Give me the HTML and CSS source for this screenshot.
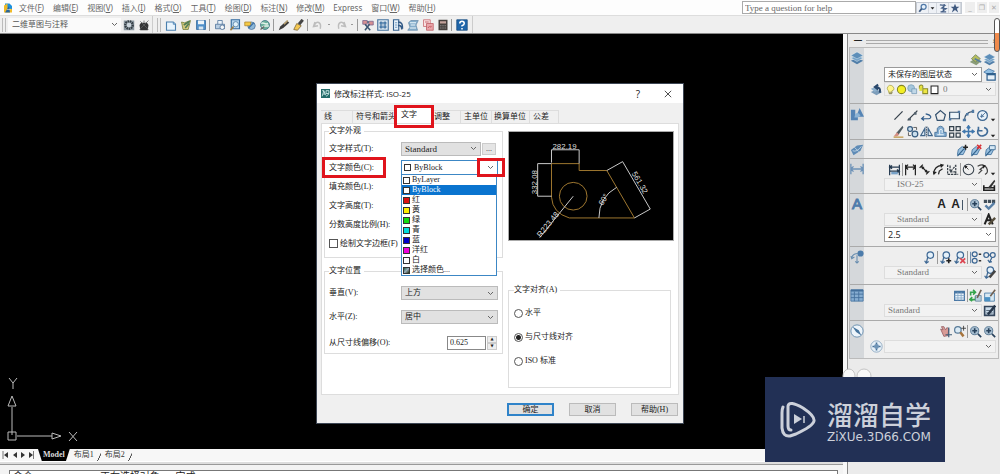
FILE: index.html
```html
<!DOCTYPE html>
<html lang="zh-CN">
<head>
<meta charset="utf-8">
<title>修改标注样式</title>
<link rel="stylesheet" href="styles.css">
</head>
<body>
<svg class="defs" aria-hidden="true">
  <symbol id="new" viewBox="0 0 16 16"><path d="M2 4h9l3 3v8H2z" fill="#e8f4fd" stroke="#4a7fae" stroke-width="1.5"/><path d="M11 4v3h3" fill="#9cc5e6" stroke="#4a7fae"/></symbol>
  <symbol id="open" viewBox="0 0 16 16"><path d="M2 4l4 1 8-3-3 12H4z" fill="#d3c77a" stroke="#6f7c38"/><path d="M5 8l8-5M7 12l5-6" stroke="#4d7c58" stroke-width="2"/></symbol>
  <symbol id="save" viewBox="0 0 16 16"><path d="M2 2h12v12H2z" fill="#4f8fc9" stroke="#30679c"/><path d="M4 2h8v5H4z" fill="#eef5fa"/><path d="M5 10h6v4H5z" fill="#d5e4ef"/></symbol>
  <symbol id="print" viewBox="0 0 16 16"><path d="M5 7V2h6v5" fill="#eef5fa" stroke="#4a6e95"/><path d="M2 7h12v6H2z" fill="#b7cce0" stroke="#4a6e95"/><circle cx="11" cy="11" r="3" fill="#f5f8fa" stroke="#45688f"/></symbol>
  <symbol id="preview" viewBox="0 0 16 16"><path d="M3 1h11v12H3z" fill="#b6d4ed" stroke="#336a9e" stroke-width="1.5"/><circle cx="9" cy="7" r="3.500" fill="#e2f1fa" stroke="#47759d"/><path d="M6 10l-4 5" stroke="#9b7b42" stroke-width="2"/></symbol>
  <symbol id="publish" viewBox="0 0 16 16"><circle cx="10" cy="9" r="5" fill="#8db8d8" stroke="#476f98"/><path d="M1 4h8v5H1z" fill="#f4c945" stroke="#a9842d"/><path d="M6 12l7-7" stroke="#3f72a5" stroke-width="2"/></symbol>
  <symbol id="globe" viewBox="0 0 16 16"><circle cx="8" cy="8" r="6" fill="#6eb19c" stroke="#386c82"/><path d="M3 6c4-3 4 3 9 0M4 11c3-3 6-1 9-2" stroke="#e4f4ec" stroke-width="2" fill="none"/><path d="M2 14l5-4" stroke="#666" stroke-width="2"/></symbol>
  <symbol id="pen" viewBox="0 0 16 16"><path d="M1 15l2-5 9-8 3 3-8 7z" fill="#3e3c3b"/><path d="M8 7l5-5" stroke="#bba26f" stroke-width="2"/></symbol>
  <symbol id="match" viewBox="0 0 16 16"><path d="M1 14l4-8 6 3-5 6z" fill="#f4c853" stroke="#765f2e"/><path d="M8 7l5-6" stroke="#444" stroke-width="4"/></symbol>
  <symbol id="undo" viewBox="0 0 16 16"><path d="M4 4l-2 6 6-1M3 9c3-8 10-5 8 4" fill="none" stroke="#bdbdbd" stroke-width="2"/></symbol>
  <symbol id="redo" viewBox="0 0 16 16"><path d="M12 4l2 6-6-1M13 9C10 1 3 4 5 13" fill="none" stroke="#bdbdbd" stroke-width="2"/></symbol>
  <symbol id="props" viewBox="0 0 16 16"><path d="M1 2h6v5H1zM9 3h6v5H9z" fill="#d68f91" stroke="#75628b"/><path d="M4 7l7 8M10 7l-6 8M7 4h2" stroke="#3a536f" stroke-width="2"/></symbol>
  <symbol id="grid" viewBox="0 0 16 16"><path d="M1 1h14v14H1z" fill="#dce9f3" stroke="#46739d" stroke-width="1.500"/><path d="M4 4h3v3H4zM9 4h3v3H9zM4 9h3v3H4zM9 9h3v3H9z" fill="#5d92bf" stroke="#3d6a96"/></symbol>
  <symbol id="palette" viewBox="0 0 16 16"><path d="M2 1h7v14H2z" fill="#e9f2fa" stroke="#34608f" stroke-width="1.500"/><path d="M4 5h3M4 8h3M4 11h3" stroke="#4a7fae"/><path d="M8 4c6 0 6 4 6 9M8 9c4-1 5 2 5 5" stroke="#315986" fill="none" stroke-width="2"/></symbol>
  <symbol id="sheet" viewBox="0 0 16 16"><path d="M2 5l3-3h10l-3 6 2 7H1l3-4z" fill="#86aecb" stroke="#6a8dac"/><path d="M4 5h8M4 12h8M5 8h6" stroke="#ecf6fb" stroke-width="1.500"/></symbol>
  <symbol id="markup" viewBox="0 0 16 16"><path d="M2 1h9v9H2z" fill="#f8dfe0" stroke="#c5656b"/><path d="M6 6h9v9H6z" fill="#e9a6aa" stroke="#bb5960"/><path d="M4 4h5M8 12c2-5 5 2 4-3" stroke="#b8444d" fill="none"/></symbol>
  <symbol id="calc" viewBox="0 0 16 16"><path d="M2 1h12v14H2z" fill="#47403d"/><path d="M4 3h8v3H4z" fill="#c4a29b"/><path d="M4 9h8M4 12h8" stroke="#999" stroke-width="1" stroke-dasharray="2 1"/></symbol>
  <symbol id="help" viewBox="0 0 16 16"><path d="M1 1h14v14H1z" fill="#1f66aa" stroke="#16497d"/><path d="M5 6q0-3 3-3t3 3q0 2-3 3v1M8 12v2" fill="none" stroke="#fff" stroke-width="2"/></symbol>
  <symbol id="gear" viewBox="0 0 16 16"><path d="M1 2h14v13H1z" fill="#8c98a1"/><circle cx="8" cy="8" r="5" fill="none" stroke="#333c43" stroke-width="3" stroke-dasharray="2 1"/><circle cx="8" cy="8" r="3" fill="#ccd5dc"/></symbol>
  <symbol id="house" viewBox="0 0 16 16"><path d="M2 8l2-3h8l2 3-1 7H3z" fill="#343536"/><path d="M3 3l11 11M14 2L2 14M8 2v3" stroke="#5f6263"/></symbol>
  <symbol id="search" viewBox="0 0 16 16"><circle cx="9" cy="6" r="4" fill="#e7f1fa" stroke="#5079a8" stroke-width="2"/><path d="M6 9l-4 5" stroke="#405c80" stroke-width="3"/></symbol>
  <symbol id="comm" viewBox="0 0 16 16"><path d="M3 3l8 1-5 4 7 1-7 5M10 2l-2 12M4 14h9" fill="none" stroke="#455f86" stroke-width="2"/></symbol>
  <symbol id="star" viewBox="0 0 16 16"><path d="M8 1l2 5h5l-4 3 2 6-5-4-5 4 2-6-4-3h5z" fill="#405a80"/></symbol>
  <symbol id="layers" viewBox="0 0 16 16"><path d="M1 11l7-3 7 3-7 4z" fill="#507ea9"/><path d="M1 8l7-3 7 3-7 4z" fill="#76a3c8" stroke="#edf5fa" stroke-width=".5"/><path d="M1 5l7-4 7 4-7 4z" fill="#5d8eb9" stroke="#edf5fa" stroke-width=".5"/></symbol>
  <symbol id="layerprops" viewBox="0 0 16 16"><path d="M1 11l6-4 8 3-6 5z" fill="#8a9d79"/><path d="M3 7l5-5 6 5-6 4z" fill="#b5bd5d" stroke="#71845f"/><path d="M7 7l8 4" stroke="#547c9f" stroke-width="2"/></symbol>
  <symbol id="layerwin" viewBox="0 0 16 16"><path d="M1 5l6-4 7 3-6 5z" fill="#91bee2" stroke="#4779a7"/><path d="M5 7h10v8H5z" fill="#e7f1f9" stroke="#30618f" stroke-width="1.500"/><path d="M5 8h10" stroke="#30618f" stroke-width="2"/></symbol>
  <symbol id="layerback" viewBox="0 0 16 16"><path d="M1 11l7-3 7 3-7 4z" fill="#7d9dba"/><path d="M1 7l6-2 3 3-4 3z" fill="#8db0cd"/><path d="M12 12q2-7-5-7M10 2L6 5l4 3" fill="none" stroke="#28476c" stroke-width="2.500"/></symbol>
  <symbol id="bulb" viewBox="0 0 16 16"><path d="M5 10q-3-3-1-6t5-2 4 4-3 4v4H6z" fill="#fff58c" stroke="#a29a3b"/><path d="M6 12h5M6 14h4" stroke="#6f6f62"/></symbol>
  <symbol id="sun" viewBox="0 0 16 16"><circle cx="8" cy="8" r="6" fill="#f3ee25" stroke="#858523" stroke-width="1.500"/></symbol>
  <symbol id="freeze" viewBox="0 0 16 16"><circle cx="6" cy="6" r="5" fill="#a6c7dc" stroke="#7299b4"/><path d="M7 7h7v7H7z" fill="#c1d8e7" stroke="#6c91b1"/></symbol>
  <symbol id="lock" viewBox="0 0 16 16"><path d="M2 7V3q3-3 5 0v3M7 7h7v7H7z" fill="#eee743" stroke="#8b8c2a" stroke-width="1.500"/><path d="M2 5h4v5H2z" fill="#dedc3b"/></symbol>
  <symbol id="square" viewBox="0 0 16 16"><path d="M3 3h10v11H3z" fill="#fff" stroke="#222" stroke-width="1.500"/></symbol>
  <symbol id="shapes" viewBox="0 0 16 16"><path d="M1 3h5v8h3v4H1z" fill="#5584b5"/><path d="M11 1l5 10H7z" fill="#5584b5"/><path d="M6 8q4-3 6 2l-3 2H5z" fill="#8eb4d5"/></symbol>
  <symbol id="line" viewBox="0 0 16 16"><path d="M3 13L13 3" stroke="#333e49" stroke-width="1.500"/></symbol>
  <symbol id="xline" viewBox="0 0 16 16"><path d="M2 14L14 2" stroke="#333e49" stroke-width="1.500"/><path d="M3 11h3v3H3zM10 4h3v3h-3z" fill="#51606c"/></symbol>
  <symbol id="pline" viewBox="0 0 16 16"><path d="M2 12h9q3-1 2-3t-6-3M5 9l-3 3 3 2" fill="none" stroke="#315c8a" stroke-width="1.500"/></symbol>
  <symbol id="polygon" viewBox="0 0 16 16"><path d="M8 2l6 5-2 7H4L2 7z" fill="none" stroke="#34516e" stroke-width="1.500"/></symbol>
  <symbol id="rect" viewBox="0 0 16 16"><path d="M2 4h12v8H2z" fill="#edf5fa" stroke="#34516e" stroke-width="1.500"/><path d="M1 11h3v3H1zM12 2h3v3h-3z" fill="#517aa3"/></symbol>
  <symbol id="arc" viewBox="0 0 16 16"><path d="M3 14Q3 4 14 3" fill="none" stroke="#34516e" stroke-width="1.500"/><path d="M1 12h4v3H1zM5 5h3v3H5zM12 1h3v4h-3z" fill="#517aa3"/></symbol>
  <symbol id="circle" viewBox="0 0 16 16"><circle cx="8" cy="8" r="6" fill="#e9f3fb" stroke="#3d6690" stroke-width="1.500"/><path d="M7 9l5-5M7 6v5M5 9h5" stroke="#3d6690"/></symbol>
  <symbol id="erase" viewBox="0 0 16 16"><path d="M5 10l8-9 1 2-6 9z" fill="#505b61"/><path d="M2 14l4-5 3 3-3 2z" fill="#d48f84"/><path d="M2 15h12" stroke="#caaa6a" stroke-width="2"/></symbol>
  <symbol id="copy" viewBox="0 0 16 16"><circle cx="5" cy="5" r="3" fill="#cbdfed" stroke="#375c80" stroke-width="1.500"/><circle cx="11" cy="11" r="3.500" fill="#cbdfed" stroke="#375c80" stroke-width="1.500"/><path d="M9 3h4v3M3 9v4h3" fill="none" stroke="#444"/></symbol>
  <symbol id="mirror" viewBox="0 0 16 16"><path d="M6 4v9H1zM10 4v9h5z" fill="#dceaf5" stroke="#42668a" stroke-width="1.500"/><path d="M8 2v13" stroke="#345" stroke-dasharray="2 1"/></symbol>
  <symbol id="offset" viewBox="0 0 16 16"><path d="M1 14V9h3V4q4-5 8 0v5h3v5z" fill="#83acd1" stroke="#416b92"/><path d="M4 12h8M7 12V6q2-2 3 0v4" stroke="#eef6fa" stroke-width="1.200" fill="none"/></symbol>
  <symbol id="array" viewBox="0 0 16 16"><path d="M2 2h5v5H2zM10 2h5v5h-5zM2 10h5v5H2zM10 10h5v5h-5z" fill="#eee" stroke="#34414c" stroke-width="1.500"/></symbol>
  <symbol id="move" viewBox="0 0 16 16"><path d="M8 2v12M2 8h12M6 4l2-3 2 3M6 12l2 3 2-3M4 6L1 8l3 2M12 6l3 2-3 2" fill="none" stroke="#4178ae" stroke-width="1.800"/></symbol>
  <symbol id="rotate" viewBox="0 0 16 16"><path d="M3 5C0 11 5 15 10 13s6-8 0-10M3 2v5h5" fill="none" stroke="#416c98" stroke-width="2"/></symbol>
  <symbol id="dashboard" viewBox="0 0 16 16"><path d="M1 9l7-5 7-1-3 7-8 5z" fill="#5e8bb6"/><path d="M3 10q5 2 10-5M5 6l5 5" fill="none" stroke="#bed4e5"/></symbol>
  <symbol id="attach" viewBox="0 0 16 16"><path d="M3 13l1-6 5-4 4 4-3 6z" fill="#9bc1df" stroke="#386b9a"/><path d="M3 15l8-9" stroke="#34658f" stroke-width="1.500"/><path d="M13 1v6M10 4h6" stroke="#222" stroke-width="1.800"/></symbol>
  <symbol id="detach" viewBox="0 0 16 16"><path d="M3 13l1-6 5-4 4 4-3 6z" fill="#9bc1df" stroke="#386b9a"/><path d="M3 15l8-9" stroke="#34658f" stroke-width="1.500"/><path d="M10 1l5 5M15 1l-5 5" stroke="#d72f36" stroke-width="2"/></symbol>
  <symbol id="blockref" viewBox="0 0 16 16"><path d="M3 13l1-6 5-4 4 4-3 6z" fill="#9bc1df" stroke="#386b9a"/><path d="M3 15l8-9" stroke="#34658f" stroke-width="1.500"/><path d="M8 2h7v5H8z" fill="#d6e8f5" stroke="#34658f"/></symbol>
  <symbol id="dim" viewBox="0 0 16 16"><path d="M1 2v12M15 2v12M1 8h14M4 5L1 8l3 3M12 5l3 3-3 3" fill="none" stroke="currentColor" stroke-width="1.500"/></symbol>
  <symbol id="lindim" viewBox="0 0 16 16"><path d="M2 2v13M14 2v13M2 5h12M5 2L2 5l3 3M11 2l3 3-3 3" fill="none" stroke="#222" stroke-width="1.500"/></symbol>
  <symbol id="quickdim" viewBox="0 0 16 16"><path d="M2 2v13M14 2v13M2 5h12M2 10h12M5 3L2 5l3 2M11 8l3 2-3 2" fill="none" stroke="#263b51" stroke-width="1.500"/><path d="M4 11h8v3H4z" fill="#78a2c8"/></symbol>
  <symbol id="aligned" viewBox="0 0 16 16"><path d="M2 6l4-4M10 14l4-4M4 4l8 8" stroke="#222" stroke-width="1.500"/><path d="M4 4l4 1-3 3zM12 12l-4-1 3-3z" fill="#222"/></symbol>
  <symbol id="arclen" viewBox="0 0 16 16"><path d="M2 13Q3 4 12 3M8 14l1-4 4-3" fill="none" stroke="#222" stroke-width="1.500"/><path d="M10 1l5 1-4 4zM1 10l5 1-4 4z" fill="#222"/></symbol>
  <symbol id="ordinate" viewBox="0 0 16 16"><path d="M2 2v12h13M5 3v8h8M6 10l6-7M12 2v12" fill="none" stroke="#39424a" stroke-width="1.500" stroke-dasharray="3 1"/></symbol>
  <symbol id="radius" viewBox="0 0 16 16"><circle cx="8" cy="8" r="6.500" fill="none" stroke="#3c4650" stroke-width="1.300"/><path d="M8 8L4 4" stroke="#222"/><path d="M3 3l4 1-3 3z" fill="#222"/></symbol>
  <symbol id="jog" viewBox="0 0 16 16"><path d="M2 4q8-4 11 2t-2 8M3 13l4-4-2-1 5-4" fill="none" stroke="#444" stroke-width="1.500"/><path d="M8 2l4 1-3 4z" fill="#222"/></symbol>
  <symbol id="dimstyle" viewBox="0 0 16 16"><path d="M1 9v6h13V9M2 12h11" stroke="#222" fill="none" stroke-width="2"/><path d="M6 12l8-10 1 2-6 9z" fill="#333"/></symbol>
  <symbol id="zoomtext" viewBox="0 0 16 16"><circle cx="7" cy="7" r="5" fill="#a9bfd1" stroke="#456987"/><path d="M4 7h6M7 4v6M11 11l4 4" stroke="#27415b" stroke-width="2"/></symbol>
  <symbol id="spell" viewBox="0 0 16 16"><path d="M1 4h14" stroke="#414e59" stroke-width="4" stroke-dasharray="4 1"/><path d="M3 9l4 4 7-7" stroke="#587fa6" stroke-width="3" fill="none"/></symbol>
  <symbol id="brush" viewBox="0 0 16 16"><path d="M2 14L7 2l5 12M4 9h6" fill="none" stroke="#222" stroke-width="2.500"/><path d="M7 14l8-8" stroke="#554d3c" stroke-width="3"/></symbol>
  <symbol id="leader" viewBox="0 0 16 16"><circle cx="9" cy="5" r="4" fill="#e5f1fa" stroke="#3e6894" stroke-width="1.500"/><path d="M6 7l-2 8M2 12l2 3 3-2" fill="none" stroke="#3e6894" stroke-width="1.500"/></symbol>
  <symbol id="leaderadd" viewBox="0 0 16 16"><use href="#leader"/><path d="M12 9v6M9 12h6" stroke="#222" stroke-width="2"/></symbol>
  <symbol id="leaderdel" viewBox="0 0 16 16"><use href="#leader"/><path d="M9 9l6 6M15 9l-6 6" stroke="#dc4551" stroke-width="2"/></symbol>
  <symbol id="leaderalign" viewBox="0 0 16 16"><path d="M2 1v14" stroke="#3e6894"/><circle cx="7" cy="4" r="3" fill="none" stroke="#3e6894" stroke-width="1.500"/><circle cx="7" cy="12" r="3" fill="none" stroke="#3e6894" stroke-width="1.500"/><path d="M12 4h3M12 12h3" stroke="#333" stroke-width="2"/></symbol>
  <symbol id="leadercollect" viewBox="0 0 16 16"><circle cx="4" cy="5" r="3" fill="none" stroke="#3e6894" stroke-width="1.500"/><circle cx="12" cy="5" r="3" fill="none" stroke="#3e6894" stroke-width="1.500"/><path d="M7 5h2M11 8l-3 6M6 11l2 3 3-1" fill="none" stroke="#3e6894" stroke-width="1.500"/></symbol>
  <symbol id="leaderstyle" viewBox="0 0 16 16"><use href="#leader"/><path d="M8 14l7-8" stroke="#444" stroke-width="3"/></symbol>
  <symbol id="bigleader" viewBox="0 0 16 16"><circle cx="12" cy="4" r="3.500" fill="#4c7cab"/><path d="M9 4Q3 4 2 9M1 7l1 3 3-2M8 6v9M6 13l2 2 2-2" fill="none" stroke="#668caf" stroke-width="1.200"/></symbol>
  <symbol id="table" viewBox="0 0 16 16"><path d="M1 2h14v13H1z" fill="#86add1" stroke="#4977a4"/><path d="M1 3h14" stroke="#436f9b" stroke-width="2"/><path d="M1 7h14M1 11h14M5 4v11M10 4v11" stroke="#436f9b"/></symbol>
  <symbol id="smalltable" viewBox="0 0 16 16"><path d="M2 3h12v11H2z" fill="#e8f2fa" stroke="#4977a4" stroke-width="1.500"/><path d="M2 4h12" stroke="#4977a4" stroke-width="3"/><path d="M2 8h12M2 11h12M6 4v10M10 4v10" stroke="#85a8c8"/></symbol>
  <symbol id="refresh" viewBox="0 0 16 16"><path d="M2 8V4h6M5 1l3 3-3 3M8 9v4H1M4 10l-3 3 3 2" fill="none" stroke="#34a44a" stroke-width="2"/><path d="M8 8h7v7H8z" fill="#b8cfdd" stroke="#68879e"/><path d="M10 11l5-10" stroke="#705f50" stroke-width="2"/></symbol>
  <symbol id="tableedit" viewBox="0 0 16 16"><path d="M2 5h12v10H2z" fill="#d9e9f3" stroke="#4278a5"/><path d="M2 10h7v5H2z" fill="#4a91c4"/><path d="M9 9l6-8" stroke="#705f50" stroke-width="2"/></symbol>
  <symbol id="tablestyle" viewBox="0 0 16 16"><path d="M2 3h12v11H2z" fill="#cadbea" stroke="#34465c" stroke-width="2"/><path d="M4 8h8M4 11h8" stroke="#456"/><path d="M6 13l9-11" stroke="#26364a" stroke-width="3"/></symbol>
  <symbol id="compass" viewBox="0 0 16 16"><circle cx="8" cy="8" r="7" fill="#edf4fa" stroke="#648bad"/><path d="M3 3l7 4 3 6-6-4z" fill="#46749d"/></symbol>
  <symbol id="pan" viewBox="0 0 16 16"><path d="M2 5l3 1-2-4h3l2 4 2-3 2 2-1 8-5 1z" fill="#d89b96" stroke="#965e62"/><path d="M12 3v12M8 12h8" stroke="#3f5d77" stroke-width="1.500"/></symbol>
  <symbol id="zoomrt" viewBox="0 0 16 16"><circle cx="6" cy="6" r="4" fill="#dcebf5" stroke="#587b99" stroke-width="1.500"/><path d="M9 9l4 5" stroke="#a7743c" stroke-width="3"/><path d="M13 1v6M10 4h6" stroke="#333"/></symbol>
  <symbol id="target" viewBox="0 0 16 16"><circle cx="8" cy="8" r="7" fill="#e8f1f8" stroke="#86a3bc"/><path d="M8 3v10M3 8h10" stroke="#4a739a" stroke-width="2"/><circle cx="8" cy="8" r="3" fill="#6f95b8"/></symbol>
  <symbol id="drop" viewBox="0 0 16 16"><path d="M2 7h12l-6 7z" fill="#222"/></symbol>
</svg>

<div class="app">
  <header>
    <div class="menurow">
      <svg class="appicon" viewBox="0 0 20 20"><path d="M4 1h9l5 5v7H4z" fill="#1c91df"/><path d="M2 5l7-4v10l9 1v7H2z" fill="#f0ba28"/><path d="M4 19L12 6l2 13z" fill="#29669a"/><path d="M8 13h7" stroke="#fff"/></svg>
      <nav class="menu">
        <a href="#">文件(<u>F</u>)</a><a href="#">编辑(<u>E</u>)</a><a href="#">视图(<u>V</u>)</a><a href="#">插入(<u>I</u>)</a><a href="#">格式(<u>O</u>)</a><a href="#">工具(<u>T</u>)</a><a href="#">绘图(<u>D</u>)</a><a href="#">标注(<u>N</u>)</a><a href="#">修改(<u>M</u>)</a><a href="#">Express</a><a href="#">窗口(<u>W</u>)</a><a href="#">帮助(<u>H</u>)</a>
      </nav>
      <input class="ask" type="text" aria-label="Help" placeholder="Type a question for help">
      <div class="askicons">
        <button aria-label="Search"><svg><use href="#search"/></svg></button><button aria-label="Search options"><svg class="mini"><use href="#drop"/></svg></button><button aria-label="Communication"><svg><use href="#comm"/></svg></button><button aria-label="Favorites"><svg><use href="#star"/></svg></button>
      </div>
      <div class="winbtns"><button>_</button><button>❐</button><button>✕</button></div>
    </div>
    <div class="toolrow">
      <div class="bar first">
        <i class="grip"></i>
        <select class="workspace" aria-label="Workspace"><option>二维草图与注释</option></select>
        <button aria-label="Settings"><svg><use href="#gear"/></svg></button><button aria-label="Home"><svg><use href="#house"/></svg></button>
      </div>
      <div class="bar">
        <i class="grip"></i>
        <button aria-label="New"><svg><use href="#new"/></svg></button><button aria-label="Open"><svg><use href="#open"/></svg></button><button aria-label="Save"><svg><use href="#save"/></svg></button><i class="sep"></i>
        <button aria-label="Print"><svg><use href="#print"/></svg></button><button aria-label="Preview"><svg><use href="#preview"/></svg></button><button aria-label="Publish"><svg><use href="#publish"/></svg></button><button aria-label="Web"><svg><use href="#globe"/></svg></button><i class="sep"></i>
        <button aria-label="Pen"><svg><use href="#pen"/></svg></button><button aria-label="Match"><svg><use href="#match"/></svg></button><i class="sep"></i>
        <button aria-label="Undo"><svg><use href="#undo"/></svg></button><i class="dash"></i><button aria-label="Redo"><svg><use href="#redo"/></svg></button><i class="dash"></i><i class="sep"></i>
        <button aria-label="Properties"><svg><use href="#props"/></svg></button><button aria-label="Design center"><svg><use href="#grid"/></svg></button><button aria-label="Palettes"><svg><use href="#palette"/></svg></button><button aria-label="Sheets"><svg><use href="#sheet"/></svg></button><button aria-label="Markup"><svg><use href="#markup"/></svg></button><button aria-label="Calculator"><svg><use href="#calc"/></svg></button><i class="sep"></i>
        <button aria-label="Help"><svg><use href="#help"/></svg></button>
      </div>
    </div>
  </header>

  <div class="work">
    <main>
      <div class="canvas">
        <svg class="ucs" viewBox="0 0 80 80" fill="none" stroke="#bbb"><path d="M9 9l4 5 4-5M13 14v6M69 63l8 9M77 63l-8 9M12 66V38M17 67h35M8 63h8v8H8zM8 37l4-10 4 10zM52 64l9 3-9 3z"/></svg>
      </div>
      <div class="sheets">
        <svg class="nav" viewBox="0 0 38 12"><path d="M3 2v8M33.500 2v8" stroke="#777"/><path d="M8 3v6L4 6zM17 3v6l-4-3zM21 3v6l4-3zM29 3v6l4-3z" fill="#333"/></svg>
        <button class="on">Model</button><button>布局1</button><button>布局2</button>
      </div>
      <div class="cmd"><div class="cmdtext"><span>命令:</span><span>正在选择对象...</span><span>完成</span></div></div>
    </main>
    <aside>
      <div class="phead"><button aria-label="Minimize">━</button><i></i><button aria-label="Close">×</button></div>
      <div class="panels">
        <section class="s1"><svg class="big"><use href="#layers"/></svg>
          <div class="body">
            <div class="tools"><svg><use href="#layerprops"/></svg><svg><use href="#layers"/></svg></div>
            <div class="line"><select aria-label="图层状态" class="dark"><option>未保存的图层状态</option></select><svg><use href="#layerwin"/></svg></div>
            <div class="line layer"><svg><use href="#layerback"/></svg><div class="layerbox"><svg><use href="#bulb"/></svg><svg><use href="#sun"/></svg><svg><use href="#freeze"/></svg><svg><use href="#lock"/></svg><svg><use href="#square"/></svg><select aria-label="图层"><option>0</option></select></div></div>
          </div></section>
        <section class="s2"><svg class="big"><use href="#shapes"/></svg>
          <div class="body">
            <div class="tools"><svg><use href="#line"/></svg><svg><use href="#xline"/></svg><svg><use href="#pline"/></svg><svg><use href="#polygon"/></svg><svg><use href="#rect"/></svg><svg><use href="#arc"/></svg><svg><use href="#circle"/></svg><svg class="mini"><use href="#drop"/></svg></div>
            <div class="tools"><svg><use href="#erase"/></svg><svg><use href="#copy"/></svg><svg><use href="#mirror"/></svg><svg><use href="#offset"/></svg><svg><use href="#array"/></svg><svg><use href="#move"/></svg><svg><use href="#rotate"/></svg><svg class="mini"><use href="#drop"/></svg></div>
          </div></section>
        <section class="s3"><svg class="big"><use href="#dashboard"/></svg>
          <div class="body"><div class="tools"><svg><use href="#attach"/></svg><svg><use href="#detach"/></svg><svg><use href="#blockref"/></svg></div></div></section>
        <section class="s4"><svg class="big pale"><use href="#dim"/></svg>
          <div class="body">
            <div class="tools"><svg><use href="#quickdim"/></svg><i></i><svg><use href="#lindim"/></svg><svg><use href="#aligned"/></svg><svg><use href="#arclen"/></svg><svg><use href="#ordinate"/></svg><i></i><svg><use href="#radius"/></svg><svg><use href="#jog"/></svg><svg class="mini"><use href="#drop"/></svg></div>
            <div class="line"><select aria-label="标注样式" class="ind"><option>ISO-25</option></select><svg><use href="#dimstyle"/></svg></div>
          </div></section>
        <section class="s5"><b class="bigA">A</b>
          <div class="body">
            <div class="tools"><b>A</b><b>A</b><i class="caret"></i><i></i><svg><use href="#zoomtext"/></svg><svg><use href="#spell"/></svg></div>
            <div class="line"><select aria-label="文字样式" class="ind"><option>Standard</option></select><svg><use href="#brush"/></svg></div>
            <div class="line"><select aria-label="文字高度" class="dark num"><option>2.5</option></select></div>
          </div></section>
        <section class="s6"><svg class="big"><use href="#bigleader"/></svg>
          <div class="body">
            <div class="tools"><svg><use href="#leader"/></svg><i></i><svg><use href="#leaderadd"/></svg><svg><use href="#leaderdel"/></svg><i></i><svg><use href="#leaderalign"/></svg><svg><use href="#leadercollect"/></svg></div>
            <div class="line"><select aria-label="引线样式" class="ind"><option>Standard</option></select><svg><use href="#leaderstyle"/></svg></div>
          </div></section>
        <section class="s7"><svg class="big"><use href="#table"/></svg>
          <div class="body">
            <div class="tools"><svg><use href="#smalltable"/></svg><i></i><svg><use href="#refresh"/></svg><svg><use href="#tableedit"/></svg></div>
            <div class="line"><select aria-label="表格样式"><option>Standard</option></select><svg><use href="#tablestyle"/></svg></div>
          </div></section>
        <section class="s8"><svg class="big"><use href="#compass"/></svg>
          <div class="body">
            <div class="tools"><svg><use href="#pan"/></svg><svg><use href="#zoomrt"/></svg><i></i><svg><use href="#zoomtext"/></svg><svg><use href="#zoomtext"/></svg></div>
            <div class="line layer"><svg><use href="#target"/></svg><select aria-label="视图"><option></option></select></div>
          </div></section>
      </div>
    </aside>
  </div>

  <div class="gauge"></div>

  <div class="dialog" role="dialog" aria-labelledby="dt">
    <div class="title">
      <svg viewBox="0 0 16 16"><path d="M0 0h16v16H0z" fill="#236b69"/><path d="M2 13l3-10 3 8M4 9h4M9 3h5v5H9zM9 13l5-4M2 3h3" fill="none" stroke="#d9f2ef" stroke-width="1.500"/></svg>
      <span id="dt">修改标注样式: ISO-25</span>
      <button aria-label="Help">?</button>
      <button aria-label="Close"><svg viewBox="0 0 10 10"><path d="M1 1l8 8M9 1L1 9" stroke="#222"/></svg></button>
    </div>
    <div class="tabs" role="tablist">
      <button role="tab" class="t1">线</button><button role="tab" class="t2">符号和箭头</button><button role="tab" class="t3" aria-selected="true">文字<span class="mark marktab"></span></button><button role="tab" class="t4">调整</button><button role="tab" class="t5">主单位</button><button role="tab" class="t6">换算单位</button><button role="tab" class="t7">公差</button>
    </div>
    <div class="page">
      <div class="col">
        <fieldset class="look"><legend>文字外观</legend>
          <div class="row"><label for="f1">文字样式(T):</label><select id="f1" class="std"><option>Standard</option></select><button class="dots">...</button></div>
          <div class="row"><label for="f2">文字颜色(C):<span class="mark marklabel"></span></label>
            <div class="combo"><select id="f2"><option>ByBlock</option></select><i class="sw"></i><span class="mark markdrop"></span>
              <ul role="listbox">
                <li><i class="sw"></i>ByLayer</li><li class="hot"><i class="sw"></i>ByBlock</li><li><i class="sw red"></i>红</li><li><i class="sw yellow"></i>黄</li><li><i class="sw green"></i>绿</li><li><i class="sw cyan"></i>青</li><li><i class="sw blue"></i>蓝</li><li><i class="sw magenta"></i>洋红</li><li><i class="sw"></i>白</li><li><i class="sw pick"></i>选择颜色...</li>
              </ul>
            </div></div>
          <div class="row"><span>填充颜色(L):</span></div>
          <div class="row"><span>文字高度(T):</span></div>
          <div class="row"><span>分数高度比例(H):</span></div>
          <label class="check"><input type="checkbox">绘制文字边框(F)</label>
        </fieldset>
        <fieldset class="place"><legend>文字位置</legend>
          <div class="row"><label for="f3">垂直(V):</label><select id="f3"><option>上方</option></select></div>
          <div class="row"><label for="f4">水平(Z):</label><select id="f4"><option>居中</option></select></div>
          <div class="row last"><label for="f5">从尺寸线偏移(O):</label><input id="f5" type="text" value="0.625"><span class="spin"><button aria-label="Up">▲</button><button aria-label="Down">▼</button></span></div>
        </fieldset>
      </div>
      <div class="col right">
        <svg class="preview" viewBox="0 0 166 109">
          <g fill="none" stroke="#a07830"><path d="M43 32h28v7h28l28 48H61Q44 82 43 66z"/><circle cx="65" cy="65" r="14"/></g>
          <g fill="none" stroke="#ccc"><path d="M43 31V18h28v14M43 32H29v33h14M99 39l16-9 28 48-16 9M65 65l-34 42M91 87q0-21 18-31"/></g>
          <g class="dimtext"><text x="44" y="17">282.19</text><text transform="translate(28 63) rotate(-90)">332.08</text><text transform="translate(124 42) rotate(60)">561.32</text><text transform="translate(95 75) rotate(-60)">60°</text><text transform="translate(32 107) rotate(-51)">R223.48</text></g>
        </svg>
        <fieldset class="align"><legend>文字对齐(A)</legend>
          <label><input type="radio" name="al">水平</label>
          <label><input type="radio" name="al" checked>与尺寸线对齐</label>
          <label><input type="radio" name="al">ISO 标准</label>
        </fieldset>
      </div>
    </div>
    <div class="actions"><button class="ok">确定</button><button>取消</button><button>帮助(H)</button></div>
  </div>

  <svg class="bumps" viewBox="0 0 30 14"><g fill="#f8f8f8" stroke="#c4c4c4"><ellipse cx="7" cy="8" rx="6" ry="7"/><ellipse cx="22" cy="8" rx="7" ry="7"/></g></svg>
  <div class="brand">
    <svg viewBox="0 0 36 38"><g fill="none" stroke="#ccd0da" stroke-width="3" stroke-linecap="round" stroke-linejoin="round"><path d="M3 6q-1 2-1 6v15q1 9 8 8l6-2q17-8 18-13t-11-13Q9 -1 8 5v20q0 4 3 4"/></g><path d="M14 13l8 5-8 5z" fill="#ccd0da"/><path d="M24 15v7" stroke="#ccd0da" stroke-width="1.500"/></svg>
    <div><strong>溜溜自学</strong><span>ZiXUe.3D66.COM</span></div>
  </div>
</div>
</body>
</html>
```
FILE: styles.css
```css
* { box-sizing: border-box; }
body {
  margin: 0;
  font: 8px/10px "Liberation Serif", "Noto Sans CJK SC", serif;
  color: #222;
}
button, select, input {
  font: inherit;
  color: inherit;
  margin: 0;
  padding: 0;
  border: 0;
  border-radius: 0;
  background: none;
}
i { font-style: normal; }
svg { display: block; flex: none; }
.defs { position: absolute; width: 0; height: 0; }
select {
  appearance: none;
  min-width: 0;
  background: #f2f2f2 url("data:image/svg+xml,%3Csvg xmlns='http://www.w3.org/2000/svg' width='7' height='5'%3E%3Cpath d='M1 1l2.500 2.500L6 1' fill='none' stroke='%23666'/%3E%3C/svg%3E") no-repeat right 3px center;
}
.app {
  position: relative;
  display: flex;
  flex-direction: column;
  height: 100vh;
  overflow: hidden;
  background: #ececec;
}

/* header */
header { flex: none; background: #efefef; border-bottom: 1px solid #888; }
.menurow {
  display: flex;
  align-items: center;
  height: 15px;
  padding: 0 1px 0 3px;
  background: #fdfdfd;
  color: #666;
}
.appicon { width: 10px; height: 12px; margin-right: 6px; }
.menu {
  display: flex;
  flex: 1;
  gap: 9px;
  font-family: "Noto Sans", "Noto Sans CJK SC", sans-serif;
}
.menu a { color: inherit; text-decoration: none; white-space: nowrap; }
.ask {
  width: 174px;
  height: 13px;
  padding: 0 2px;
  border: 1px solid #aaa;
  background: #fff;
  font-size: 9px;
}
.ask::placeholder { color: #666; opacity: 1; }
.askicons { display: flex; height: 12px; border: 1px solid #c3c9d2; background: #eef1f6; }
.askicons button { display: grid; place-items: center; width: 12px; border-right: 1px solid #d3d8df; }
.askicons button:nth-child(2) { width: 8px; }
.askicons svg { width: 10px; height: 10px; }
.askicons .mini { width: 5px; height: 5px; }
.winbtns { display: flex; gap: 2px; padding-left: 3px; color: #aaa; font-size: 7px; font-family: "DejaVu Sans", sans-serif; }
.winbtns button { width: 10px; height: 11px; background: #eee; }
.toolrow { display: flex; height: 18px; border-top: 1px solid #ddd; }
.bar { display: flex; align-items: center; padding: 0 3px 0 4px; border-right: 1px solid #ccc; }
.bar.first { padding-left: 2px; padding-right: 1px; }
.bar button { width: 15px; height: 14px; display: grid; place-items: center; }
.bar svg { width: 12px; height: 12px; }
.grip { width: 4px; height: 14px; margin-right: 2px; border: 1px solid #bbb; border-width: 0 1px; }
.sep { width: 1px; height: 12px; margin: 0 2px 0 1px; background: #999; }
.dash { width: 2px; height: 1px; margin: 0 3px; background: #999; }
.workspace {
  width: 113px;
  height: 14px;
  padding-left: 4px;
  background-color: #fafafa;
  color: #555;
}

/* drawing area */
.work { flex: 1; display: flex; min-height: 0; }
main { flex: 1; display: flex; flex-direction: column; min-width: 0; }
.canvas { flex: 1; display: flex; align-items: flex-end; background: #000; }
.ucs { width: 80px; height: 80px; }
.sheets { display: flex; height: 12px; background: #f7f7f7; color: #333; }
.nav { width: 38px; height: 12px; }
.sheets button { padding: 0 7px 0 2px; margin-right: 2px; background: linear-gradient(115deg, transparent 88%, #555 89%, #555 91%, transparent 92%); }
.sheets .on { padding: 0 5px; background: #000; color: #ddd; font-weight: bold; clip-path: polygon(0 0, 100% 0, 88% 100%, 12% 100%); }
.cmd { height: 13px; padding: 8px 5px 0 9px; background: #f3f3f3; border-top: 1px solid #fff; box-shadow: inset 0 2px #ddd, inset 0 3px #999; overflow: hidden; }
.cmdtext { display: flex; border: 1px solid #777; border-bottom: 0; background: #fff; font-size: 10px; line-height: 12px; }
.cmdtext span:first-child { width: 90px; padding-left: 3px; }
.cmdtext span:last-child { padding-left: 8px; }

/* dashboard */
aside { width: 157px; padding: 2px 1px 0 2px; border-left: 4px solid #f8f8f8; box-shadow: inset 1px 0 #888; background: #ebebeb; }
.phead { display: flex; align-items: center; gap: 4px; height: 11px; padding: 0 2px 0 5px; }
.phead i { flex: 1; height: 4px; border: 1px solid #aaa; border-width: 1px 0; }
.phead button { font-size: 8px; line-height: 8px; font-weight: bold; }
.panels { border: 1px solid #bbb; }
section { display: flex; gap: 3px; padding-right: 2px; border-bottom: 1px solid #aaa; background: linear-gradient(90deg, #d5d8db 14px, #eee 14px); }
section:last-child { border-bottom: 0; }
.big { width: 14px; height: 14px; margin-top: 3px; }
.s3 .big { margin-top: 2px; }
.pale { color: #6d92b8; }
.bigA { width: 14px; font: 15px/20px "Liberation Sans", sans-serif; color: #4f7cab; text-align: center; -webkit-text-stroke: 1px #4f7cab; }
.body { flex: 1; min-width: 0; padding-top: 3px; }
.tools, .line { display: flex; align-items: center; justify-content: flex-end; gap: 1px; }
.tools { height: 15px; }
.tools svg, .line svg { width: 13px; height: 13px; }
.tools .mini { align-self: flex-end; width: 6px; height: 8px; }
.tools i { width: 1px; height: 13px; background: #999; }
.tools b { width: 13px; font: bold 12px/13px "Liberation Sans", sans-serif; text-align: center; }
.tools .caret { height: 10px; background: #456; margin: 0 3px 0 -1px; }
.s2 .tools { height: 16px; }
.line { padding-left: 17px; min-height: 14px; }
.line select { flex: 1; height: 13px; padding-left: 3px; border: 1px solid #ddd; color: #777; font-size: 9px; }
.line .ind { padding-left: 12px; }
.line .dark { height: 15px; background-color: #fff; border-color: #999; color: #222; }
.line .dark:not(.num) { font-size: 8px; }
.line .num { font-family: "Open Sans", sans-serif; }
.line.layer { padding-left: 3px; }
.layerbox { flex: 1; display: flex; align-items: center; border: 1px solid #ddd; }
.layerbox svg { width: 11px; height: 11px; }
.layerbox select { height: 12px; border: 0; }
.s1 .tools { height: 16px; }
.s1 .body { padding-bottom: 7px; }
.s5 .line { margin-bottom: 1px; }
.s4 .body { padding-bottom: 2px; }
.s5 .body { padding-bottom: 3px; }
.s6 .body { padding-bottom: 5px; }
.s7 .body { padding-bottom: 3px; }
.s8 .body { padding-bottom: 5px; }

/* dialog */
.dialog {
  position: absolute;
  top: 83px;
  left: 50%;
  width: 368px;
  margin-left: -184px;
  background: #f0f0f0;
  border: 1px solid #3d4654;
}
.title {
  display: flex;
  align-items: center;
  height: 19px;
  padding: 0 8px 0 4px;
  gap: 4px;
  background: #fff;
  font-family: "Open Sans", "Noto Sans CJK SC", sans-serif;
}
.title > svg { width: 9px; height: 9px; }
.title span { flex: 1; }
.title button { width: 14px; margin-left: 12px; font-size: 10px; display: grid; place-items: center; }
.title button svg { width: 8px; height: 8px; }
.tabs { display: flex; align-items: flex-end; height: 20px; margin: 0 4px; }
.tabs button { flex: none; height: 13px; text-align: left; padding-left: 3px; border: 1px solid #ddd; border-bottom: 0; border-left: 0; white-space: nowrap; }
.tabs .t1 { width: 32px; }
.tabs .t2 { width: 44px; overflow: hidden; }
.tabs .t3 { position: relative; width: 36px; height: 17px; padding-left: 4px; background: #fff; }
.tabs .t4 { width: 28px; padding-left: 1px; }
.tabs .t5 { width: 31px; }
.tabs .t6 { width: 38px; padding-left: 2px; }
.tabs .t7 { width: 29px; }
.mark { position: absolute; border: 3px solid #e0141c; z-index: 4; }
.marktab { left: -3px; right: -2px; top: -2px; bottom: -5px; }
.page { display: flex; gap: 5px; margin: 0 4px; padding: 2px 4px 6px 2px; background: #fff; border: 1px solid #ddd; min-height: 272px; }
.col { width: 179px; }
.right { flex: 1; display: flex; flex-direction: column; justify-content: space-between; padding: 5px 0 0; }
fieldset { min-width: 0; margin: 0; padding: 0 4px; border: 1px solid #ddd; }
legend { height: 10px; padding: 0 3px 0 0; }
.row { display: flex; align-items: center; height: 19px; }
.row label, .row > span:first-child { width: 72px; white-space: nowrap; }
.row label { position: relative; }
.row select { flex: 1; height: 14px; padding-left: 3px; border: 1px solid #bbb; background-color: #e1e1e1; }
.look { height: 132px; padding-top: 3px; }
.look .std { flex: none; width: 80px; font-size: 9px; }
.dots { width: 14px; height: 12px; margin-left: 1px; border: 1px solid #ccc; background: #e5e5e5; }
.marklabel { left: -7px; right: 15px; top: -6px; bottom: -5px; }
.combo { position: relative; flex: 1; display: flex; }
.combo select { height: 15px; padding-left: 12px; border-color: #3c87c5; background-color: #fff; }
.sw { flex: none; width: 7px; height: 7px; border: 1px solid #333; background: #fff; }
.combo > .sw { position: absolute; left: 3px; top: 4px; }
.markdrop { top: -2px; right: -7px; width: 28px; height: 19px; }
.combo ul {
  position: absolute;
  z-index: 3;
  top: 14px;
  left: 0;
  right: 1px;
  margin: 0;
  padding: 0;
  list-style: none;
  background: #fff;
  border: 1px solid #3c87c5;
}
.combo li { display: flex; align-items: center; gap: 2px; height: 10px; line-height: 10px; padding-left: 1px; overflow: hidden; }
.combo .hot { background: #0a74cf; color: #fff; }
.red { background: #d11; } .yellow { background: #fe0; } .green { background: #1d1; } .cyan { background: #0dd; }
.blue { background: #00c; } .magenta { background: #e0d; } .pick { background: linear-gradient(135deg, #264, #9ab 50%, #231); }
.check { display: flex; align-items: center; height: 19px; gap: 2px; }
input[type="checkbox"], input[type="radio"] { appearance: none; width: 9px; height: 9px; border: 1px solid #555; background: #fff; }
.place { height: 88px; margin-top: 8px; padding-top: 5px; }
.place .row { height: 24px; }
.place .row.last { height: 27px; }
.last label { flex: 1; }
.last input { width: 39px; height: 14px; padding-left: 2px; border: 1px solid #888; }
.spin { display: flex; flex-direction: column; width: 10px; margin: 0 1px; }
.spin button { height: 7px; border: 1px solid #ccc; background: #eee; font: 4px/4px "DejaVu Sans", sans-serif; }
.preview { width: 100%; height: auto; background: #000; border: 1px solid #aaa; }
.dimtext { fill: #ddd; font: 8px "Liberation Sans", sans-serif; }
.align { height: 103px; margin: 0 3px 0 0; padding: 6px 5px 0; }
.align label { display: flex; align-items: center; gap: 2px; height: 24px; }
input[type="radio"] { border-radius: 50%; }
input[type="radio"]:checked { background: radial-gradient(circle, #222 2px, #fff 3px); }
.actions { display: flex; justify-content: flex-end; gap: 15px; padding: 8px 5px 7px; }
.actions button { width: 47px; height: 13px; border: 1px solid #bbb; background: #e1e1e1; }
.actions .ok { border: 2px solid #2f83c9; line-height: 8px; }

/* overlays */
.gauge {
  position: absolute;
  right: 0;
  top: 18px;
  width: 6px;
  height: 34px;
  border: 1px solid #555;
  border-radius: 3px;
  background: linear-gradient(#fff 14px, #f08a4b 14px);
}
.bumps { position: absolute; right: 128px; bottom: 92px; width: 30px; height: 14px; }
.brand {
  position: absolute;
  right: 55px;
  bottom: 12px;
  display: flex;
  align-items: center;
  gap: 11px;
  width: 180px;
  height: 85px;
  padding-left: 15px;
  background: #223055;
  color: #ccd0da;
}
.brand svg { width: 36px; height: 38px; }
.brand strong { display: block; font: 500 26px/34px "Noto Sans CJK SC", sans-serif; }
.brand span { display: block; font: 12px/12px "DejaVu Sans", sans-serif; }
```
